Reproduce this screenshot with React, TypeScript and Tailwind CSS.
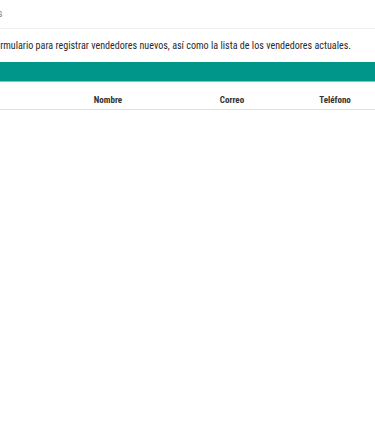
const columns = ["Nombre", "Correo", "Teléfono"];

export default function App() {
  return (
    <div className="w-[375px] h-[437px] overflow-hidden bg-white font-['Roboto_Condensed','Liberation_Sans_Narrow','DejaVu_Sans_Condensed',sans-serif]">
      <div className="ml-[-60px] w-[460px]">
        {/* Top bar */}
        <div className="h-[29px] flex items-center border-b border-[#f1f1f1]">
          <span className="ml-[11px] text-[11px] text-[#8a8a8a]">Vendedores</span>
        </div>

        {/* Description */}
        <div className="mt-[10px] pr-[49px] flex justify-end">
          <p className="shrink-0 text-[10.1px] leading-[14px] text-[#2b2b2b] whitespace-nowrap">
            En esta sección se muestra el formulario para registrar vendedores nuevos, así como la lista de los vendedores actuales.
          </p>
        </div>

        {/* Teal bar */}
        <div className="mt-[9px] h-[20px] bg-[#00978a] border-b border-[#7ccdc4]" />

        {/* Table header */}
        <div className="mt-[6px] pt-[4px] grid grid-cols-[108px_120px_128px_78px] h-[22px] items-center border-b border-[#e2e2e2] text-[9px] font-bold text-[#333]">
          <span />
          {columns.map((c) => (
            <span key={c} className="text-center">
              {c}
            </span>
          ))}
        </div>
      </div>
    </div>
  );
}
